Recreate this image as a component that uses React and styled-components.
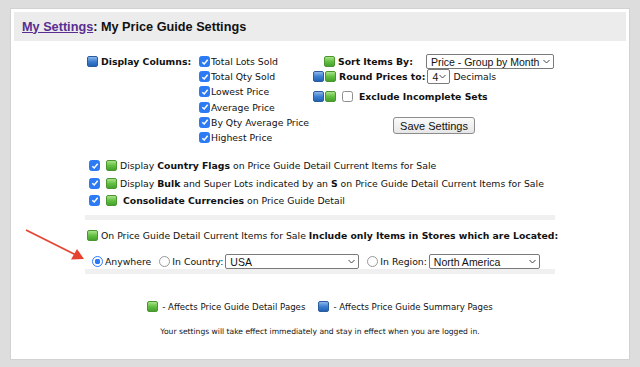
import React from "react";
import styled, { createGlobalStyle } from "styled-components";

const GlobalStyle = createGlobalStyle`
  html, body {
    margin: 0;
    padding: 0;
    background: #dddddd;
  }
  body {
    font-family: "DejaVu Sans", Verdana, sans-serif;
    font-size: 9.3px;
    color: #111;
  }
`;

const Page = styled.div`
  position: relative;
  width: 640px;
  height: 367px;
  padding: 8px 10px 7px;
  box-sizing: border-box;
`;

const Panel = styled.div`
  height: 100%;
  background: #fff;
  border: 1px solid #d2d2d2;
  box-sizing: border-box;
  padding: 3px;
  display: flex;
  flex-direction: column;
  align-items: center;
`;

const TitleBar = styled.div`
  align-self: stretch;
  height: 29px;
  background: #ececec;
  display: flex;
  align-items: center;
  padding-left: 8px;
  font-family: "Liberation Sans", Arial, sans-serif;
  font-weight: bold;
  font-size: 12.7px;
  color: #111;

  a {
    color: #5a2d91;
    text-decoration: underline;
  }
`;

const Body = styled.div`
  width: 470px;
  margin-top: 13px;
  display: flex;
  flex-direction: column;
`;

const Top = styled.div`
  display: flex;
  padding-left: 2px;
`;

const LeftCol = styled.div`
  width: 226px;
  display: flex;
  align-items: flex-start;
`;

const ColumnsLabel = styled.div`
  width: 112px;
  display: flex;
  align-items: center;
  gap: 2px;
  height: 15px;
  font-weight: bold;
`;

const CheckList = styled.div`
  display: flex;
  flex-direction: column;
`;

const CheckRow = styled.label`
  display: flex;
  align-items: center;
  gap: 1px;
  height: 15.2px;
  white-space: nowrap;
`;

const RightCol = styled.div`
  flex: 1;
  display: flex;
  flex-direction: column;
`;

const OptRow = styled.div`
  display: flex;
  align-items: center;
  height: ${(p) => p.$h || 15}px;
  padding-left: ${(p) => p.$indent || 0}px;
  white-space: nowrap;
  gap: 1px;
`;

const Bold = styled.b`
  font-weight: bold;
  margin-left: ${(p) => p.$ml || 0}px;
  margin-right: ${(p) => p.$mr || 0}px;
`;

const ButtonRow = styled.div`
  display: flex;
  justify-content: center;
  margin-top: 9px;
`;

const Button = styled.button`
  font-family: "Liberation Sans", Arial, sans-serif;
  font-size: 11px;
  height: 17px;
  padding: 0 6px;
  background: linear-gradient(#fbfbfb, #e6e6e6);
  border: 1px solid #8c8c8c;
  border-radius: 3px;
  color: #111;
`;

const Select = styled.div`
  display: inline-flex;
  align-items: center;
  justify-content: space-between;
  box-sizing: border-box;
  width: ${(p) => p.$w}px;
  height: 15px;
  border: 1px solid #7a7a7a;
  border-radius: 2px;
  padding: 0 3px 0 4px;
  margin-left: ${(p) => p.$ml || 0}px;
  margin-right: ${(p) => p.$mr || 0}px;
  font-family: "Liberation Sans", Arial, sans-serif;
  font-size: 10.5px;
  background: #fff;
  color: #111;
  white-space: nowrap;
`;

const Wide = styled.div`
  display: flex;
  flex-direction: column;
  margin-top: 12px;
`;

const LongRow = styled.div`
  display: flex;
  align-items: center;
  height: ${(p) => p.$h || 17}px;
  padding-left: 4px;
  gap: 3px;
  white-space: nowrap;
`;

const Band = styled.div`
  height: 5px;
  background: #f0f0f0;
  margin-top: ${(p) => p.$mt || 0}px;
`;

const RadioRow = styled.div`
  display: flex;
  align-items: center;
  height: 15px;
  margin-top: 4px;
  padding-left: 7px;
  white-space: nowrap;
`;

const RadioLabel = styled.span`
  margin: 0 ${(p) => p.$mr || 4}px 0 ${(p) => p.$ml || 2}px;
`;

const Radio = styled.span`
  width: 11px;
  height: 11px;
  box-sizing: border-box;
  border-radius: 50%;
  flex: none;
  border: 1px solid ${(p) => (p.$on ? "#2d7bf4" : "#9a9a9a")};
  background: ${(p) =>
    p.$on ? "radial-gradient(circle, #2d7bf4 0 2.6px, #fff 3px)" : "#fff"};
  margin-left: ${(p) => p.$ml || 0}px;
`;

const Legend = styled.div`
  display: flex;
  justify-content: center;
  align-items: center;
  gap: 4px;
  margin-top: 27px;
  font-size: 8.6px;
  white-space: nowrap;
`;

const Note = styled.div`
  text-align: center;
  margin-top: 15px;
  font-size: 7.6px;
  white-space: nowrap;
`;

const Swatch = styled.span`
  display: inline-block;
  flex: none;
  width: 11px;
  height: 11px;
  box-sizing: border-box;
  border-radius: 2px;
  margin-left: ${(p) => p.$ml || 0}px;
  margin-right: ${(p) => p.$mr || 0}px;
  border: 1px solid ${(p) => (p.$c === "blue" ? "#2b5d9e" : "#4b9631")};
  background: ${(p) =>
    p.$c === "blue"
      ? "linear-gradient(#8db6ea, #3d7fd0 50%, #2462b3)"
      : "linear-gradient(#a9e38a, #64c042 50%, #44a12c)"};
`;

const Box = styled.span`
  width: 11px;
  height: 11px;
  box-sizing: border-box;
  border-radius: 2.5px;
  flex: none;
  display: inline-flex;
  align-items: center;
  justify-content: center;
  margin-left: ${(p) => p.$ml || 0}px;
  margin-right: ${(p) => p.$mr || 0}px;
  background: ${(p) => (p.$on ? "#2d7bf4" : "#fff")};
  border: 1px solid ${(p) => (p.$on ? "#2d7bf4" : "#8e8e8e")};
`;

const Arrow = styled.svg`
  position: absolute;
  left: 20px;
  top: 224px;
`;

const Chevron = () => (
  <svg width="7" height="5" viewBox="0 0 7 5">
    <path d="M0.5 1 L3.5 4 L6.5 1" fill="none" stroke="#444" strokeWidth="1" />
  </svg>
);

const Check = ({ on = true, ml, mr }) => (
  <Box $on={on} $ml={ml} $mr={mr}>
    {on && (
      <svg width="8" height="8" viewBox="0 0 8 8">
        <path d="M1.3 4.2 L3.2 6 L6.7 1.8" fill="none" stroke="#fff" strokeWidth="1.5" />
      </svg>
    )}
  </Box>
);

const columns = [
  "Total Lots Sold",
  "Total Qty Sold",
  "Lowest Price",
  "Average Price",
  "By Qty Average Price",
  "Highest Price",
];

export default function App() {
  return (
    <>
      <GlobalStyle />
      <Page>
        <Panel>
          <TitleBar>
            <a href="#">My Settings</a>: My Price Guide Settings
          </TitleBar>
          <Body>
            <Top>
              <LeftCol>
                <ColumnsLabel>
                  <Swatch $c="blue" $mr={1} />
                  Display Columns:
                </ColumnsLabel>
                <CheckList>
                  {columns.map((c) => (
                    <CheckRow key={c}>
                      <Check />
                      {c}
                    </CheckRow>
                  ))}
                </CheckList>
              </LeftCol>
              <RightCol>
                <OptRow $indent={11}>
                  <Swatch $c="green" />
                  <Bold $ml={2}>Sort Items By:</Bold>
                  <Select $w={128} $ml={12}>
                    Price - Group by Month <Chevron />
                  </Select>
                </OptRow>
                <OptRow>
                  <Swatch $c="blue" />
                  <Swatch $c="green" />
                  <Bold $ml={2}>Round Prices to:</Bold>
                  <Select $w={23} $ml={1} $mr={2}>
                    4 <Chevron />
                  </Select>
                  Decimals
                </OptRow>
                <OptRow $h={24}>
                  <Swatch $c="blue" />
                  <Swatch $c="green" />
                  <Check on={false} ml={5} mr={5} />
                  <Bold>Exclude Incomplete Sets</Bold>
                </OptRow>
                <ButtonRow>
                  <Button>Save Settings</Button>
                </ButtonRow>
              </RightCol>
            </Top>
            <Wide>
              <LongRow>
                <Check />
                <Swatch $c="green" $ml={3} />
                <span>
                  Display <b>Country Flags</b> on Price Guide Detail Current Items for Sale
                </span>
              </LongRow>
              <LongRow $h={18}>
                <Check />
                <Swatch $c="green" $ml={3} />
                <span>
                  Display <b>Bulk</b> and Super Lots indicated by an <b>S</b> on Price Guide
                  Detail Current Items for Sale
                </span>
              </LongRow>
              <LongRow $h={16}>
                <Check />
                <Swatch $c="green" $ml={3} />
                <span>
                  &nbsp;<b>Consolidate Currencies</b> on Price Guide Detail
                </span>
              </LongRow>
              <Band $mt={7} />
              <LongRow $h={30}>
                <Swatch $c="green" $ml={-2} />
                <span>
                  On Price Guide Detail Current Items for Sale{" "}
                  <b>Include only Items in Stores which are Located:</b>
                </span>
              </LongRow>
              <RadioRow>
                <Radio $on />
                <RadioLabel $mr={8}>Anywhere</RadioLabel>
                <Radio />
                <RadioLabel $mr={2}>In Country:</RadioLabel>
                <Select $w={134} $mr={8}>
                  USA <Chevron />
                </Select>
                <Radio />
                <RadioLabel $mr={2}>In Region:</RadioLabel>
                <Select $w={111}>
                  North America <Chevron />
                </Select>
              </RadioRow>
              <Band />
            </Wide>
            <Legend>
              <Swatch $c="green" />
              <span>- Affects Price Guide Detail Pages</span>
              <Swatch $c="blue" $ml={9} />
              <span>- Affects Price Guide Summary Pages</span>
            </Legend>
            <Note>
              Your settings will take effect immediately and stay in effect when you are logged in.
            </Note>
          </Body>
        </Panel>
        <Arrow width="70" height="42" viewBox="0 0 70 42">
          <line x1="6" y1="6" x2="56" y2="31" stroke="#e5422f" strokeWidth="1.6" />
          <polygon points="64,35 51,35.5 57,25" fill="#e5422f" />
        </Arrow>
      </Page>
    </>
  );
}
